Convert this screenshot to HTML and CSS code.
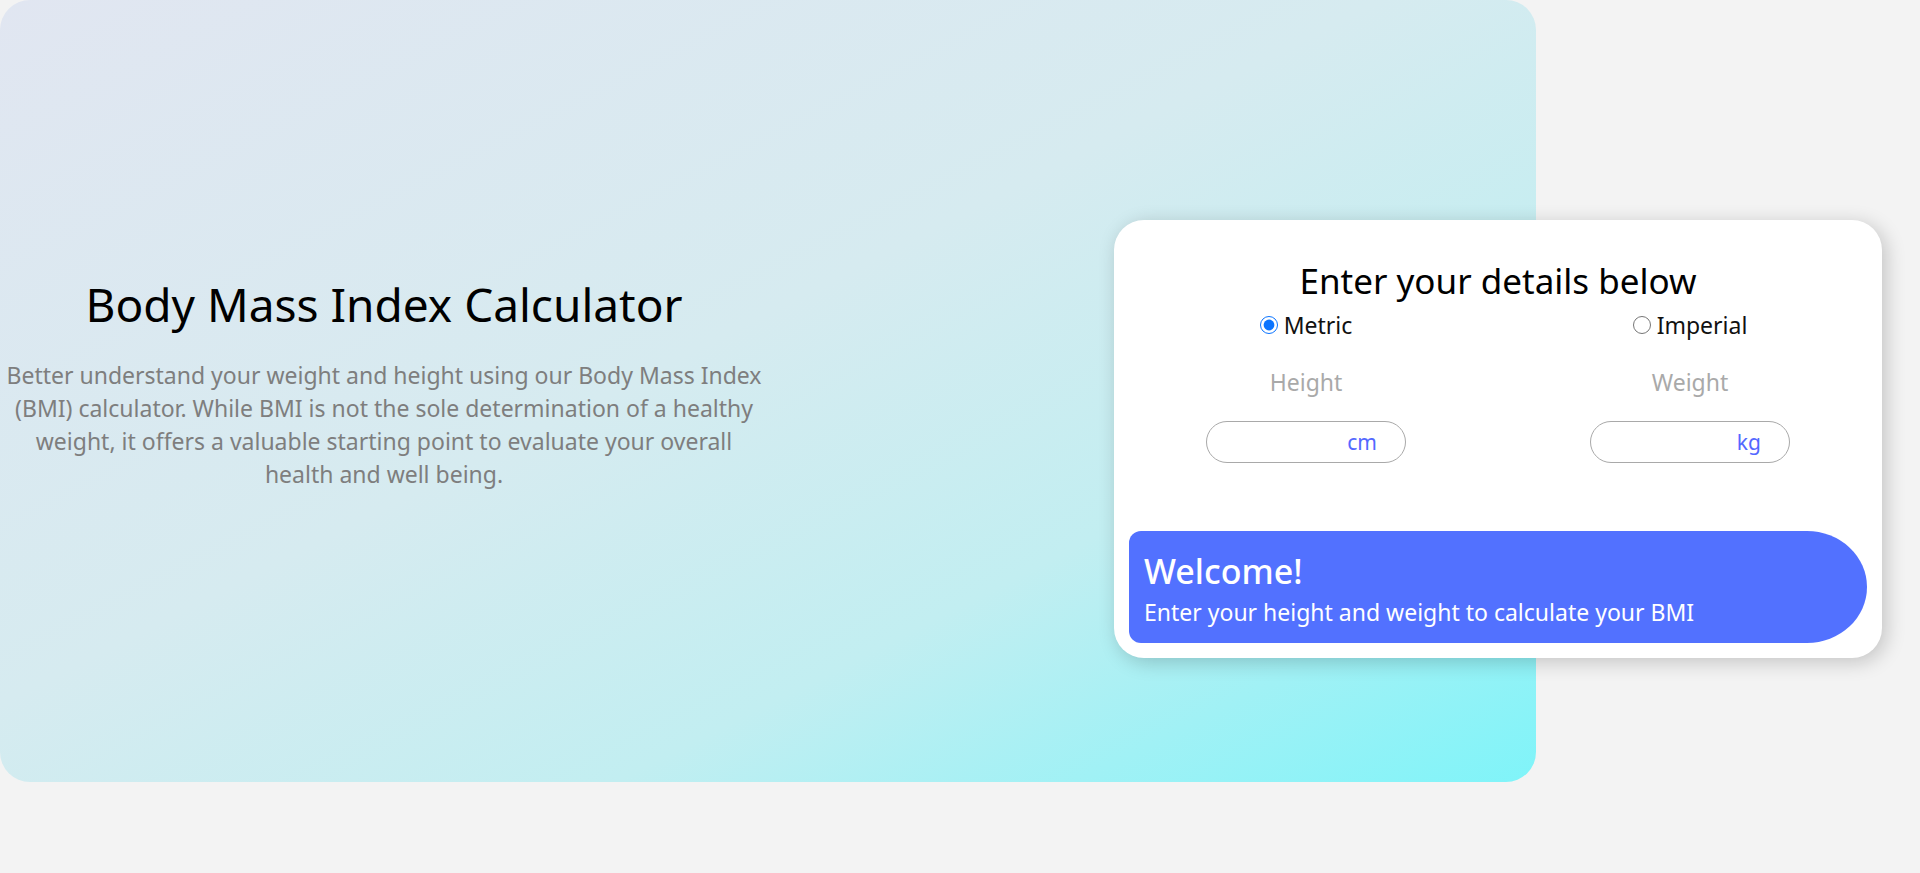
FILE: index.html
```html
<!DOCTYPE html>
<html lang="en">
<head>
<meta charset="utf-8">
<title>BMI Calculator</title>
<link rel="stylesheet" href="styles.css">
</head>
<body>
<main class="hero">
  <section class="intro">
    <h1 class="intro-title">Body Mass Index Calculator</h1>
    <p class="intro-text">Better understand your weight and height using our Body Mass Index (BMI) calculator. While BMI is not the sole determination of a healthy weight, it offers a valuable starting point to evaluate your overall health and well being.</p>
  </section>
  <section class="card">
    <h2 class="card-title">Enter your details below</h2>
    <div class="grid">
      <label class="radio"><input type="radio" name="unit" checked> Metric</label>
      <label class="radio"><input type="radio" name="unit"> Imperial</label>
      <div class="field-label">Height</div>
      <div class="field-label">Weight</div>
      <div class="field-wrap"><div class="field"><input class="field-input" type="text"><span class="unit">cm</span></div></div>
      <div class="field-wrap"><div class="field"><input class="field-input" type="text"><span class="unit">kg</span></div></div>
    </div>
    <div class="result">
      <div class="result-title">Welcome!</div>
      <div class="result-text">Enter your height and weight to calculate your BMI</div>
    </div>
  </section>
</main>
</body>
</html>
```
FILE: styles.css
```css
* { box-sizing: border-box; }
html, body { margin: 0; padding: 0; }
body {
  background: #f3f3f3;
  font-family: "Noto Sans", "Open Sans", sans-serif;
  height: 873px;
  overflow: hidden;
}
.hero {
  width: 1536px;
  height: 782px;
  border-radius: 30px;
  background: linear-gradient(to bottom right, #e1e6f1 0%, #d6ebf0 45%, #c2eef1 70%, #7ff4f9 100%);
  display: flex;
  align-items: flex-start;
}
.intro {
  width: 768px;
  flex-shrink: 0;
  text-align: center;
  padding-top: 273px;
}
.intro-title {
  margin: 0;
  font-size: 46px;
  font-weight: 400;
  line-height: 62px;
  color: #000;
}
.intro-text {
  margin: 24px 0 0;
  font-size: 23px;
  font-weight: 400;
  line-height: 33px;
  color: #7e7e7e;
}
.card {
  flex-shrink: 0;
  width: 768px;
  margin-left: 346px;
  margin-top: 220px;
  background: #fff;
  border-radius: 30px;
  box-shadow: 4px 4px 20px rgba(0, 0, 0, 0.2);
  padding: 38px 0 15px;
  display: flex;
  flex-direction: column;
}
.card-title {
  margin: 0;
  text-align: center;
  font-size: 35px;
  font-weight: 400;
  line-height: 46px;
  color: #000;
}
.grid {
  display: grid;
  grid-template-columns: 1fr 1fr;
  justify-items: center;
  margin-top: 6px;
}
.radio {
  display: flex;
  align-items: center;
  gap: 6px;
  font-size: 23px;
  line-height: 30px;
  color: #111;
}
.radio input {
  width: 18px;
  height: 18px;
  margin: 0;
  accent-color: #0b74ff;
}
.field-label {
  margin-top: 27px;
  font-size: 23px;
  line-height: 30px;
  color: #a9a9a9;
}
.field-wrap {
  margin-top: 24px;
}
.field {
  width: 200px;
  height: 42px;
  border: 1px solid #a9a9a9;
  border-radius: 21px;
  display: flex;
  align-items: center;
  padding: 0 28px 0 16px;
}
.field-input {
  flex: 1;
  min-width: 0;
  border: none;
  outline: none;
  background: transparent;
  font-family: inherit;
  font-size: 20px;
}
.unit {
  font-size: 21px;
  color: #5468ff;
}
.result {
  margin: 68px 15px 0;
  height: 112px;
  background: #5271ff;
  border-radius: 12px 60px 60px 12px / 12px 56px 56px 12px;
  padding: 17px 15px 0;
  color: #fff;
}
.result-title {
  font-size: 34px;
  font-weight: 500;
  line-height: 46px;
}
.result-text {
  font-size: 23px;
  line-height: 30px;
  margin-top: 3px;
}
```
